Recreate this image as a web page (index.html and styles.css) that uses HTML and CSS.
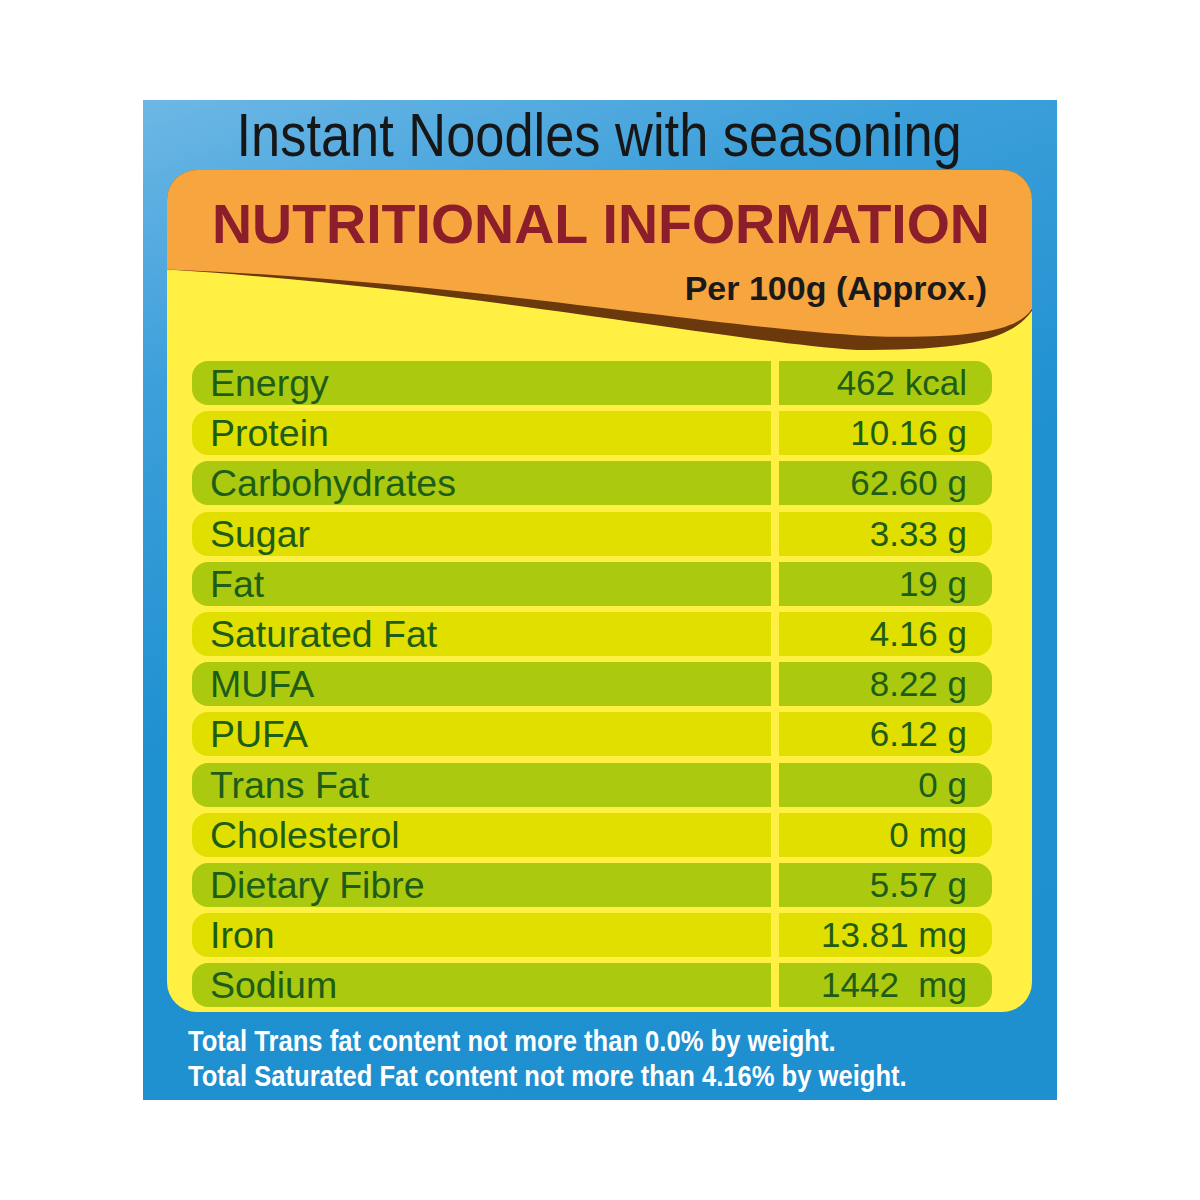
FILE: index.html
```html
<!DOCTYPE html>
<html lang="en">
<head>
  <meta charset="UTF-8" />
  <meta name="viewport" content="width=device-width, initial-scale=1.0" />
  <title>Nutritional Information</title>
  <link rel="stylesheet" href="styles.css">
</head>
<body>
  <div class="panel">
    <h1 class="title"><span class="narrow">Instant Noodles with seasoning</span></h1>

    <div class="card">
      <div class="header">
        <!-- fundo laranja com a onda marrom -->
        <svg class="wave" viewBox="0 0 865 190" preserveAspectRatio="none">
          <path d="M0 0 H865 V140 C845 168 800 180 690 179 C540 168 300 118 0 99 Z" fill="#6b390c" />
          <path d="M0 0 H865 V138 C850 160 810 166 720 166 C560 160 300 110 0 99 Z" fill="#f6a53f" />
        </svg>
        <h2 class="header-title">NUTRITIONAL INFORMATION</h2>
        <div class="header-sub">Per 100g (Approx.)</div>
      </div>

      <div class="rows">
        <div class="row"><div class="name">Energy</div><div class="value">462 kcal</div></div>
        <div class="row"><div class="name">Protein</div><div class="value">10.16 g</div></div>
        <div class="row"><div class="name">Carbohydrates</div><div class="value">62.60 g</div></div>
        <div class="row"><div class="name">Sugar</div><div class="value">3.33 g</div></div>
        <div class="row"><div class="name">Fat</div><div class="value">19 g</div></div>
        <div class="row"><div class="name">Saturated Fat</div><div class="value">4.16 g</div></div>
        <div class="row"><div class="name">MUFA</div><div class="value">8.22 g</div></div>
        <div class="row"><div class="name">PUFA</div><div class="value">6.12 g</div></div>
        <div class="row"><div class="name">Trans Fat</div><div class="value">0 g</div></div>
        <div class="row"><div class="name">Cholesterol</div><div class="value">0 mg</div></div>
        <div class="row"><div class="name">Dietary Fibre</div><div class="value">5.57 g</div></div>
        <div class="row"><div class="name">Iron</div><div class="value">13.81 mg</div></div>
        <div class="row"><div class="name">Sodium</div><div class="value">1442 &nbsp;mg</div></div>
      </div>
    </div>

    <div class="notes">
      <p><span class="narrow">Total Trans fat content not more than 0.0% by weight.</span></p>
      <p><span class="narrow">Total Saturated Fat content not more than 4.16% by weight.</span></p>
    </div>
  </div>
</body>
</html>
```

FILE: styles.css
```css
body {
  margin: 0;
  background: #fff;
  font-family: 'Liberation Sans', Arial, sans-serif;
}

.panel {
  width: 914px;
  height: 1000px;
  margin: 100px auto 0;
  padding: 0 25px 0 24px;
  box-sizing: border-box;
  background: linear-gradient(160deg, #6db7e5 0%, #3c9fda 22%, #1f90d0 50%, #1e8fcf 100%);
}

/* texto condensado (sem fonte narrow instalada) */
.narrow {
  display: inline-block;
  white-space: nowrap;
}

.title {
  margin: 0;
  height: 70px;
  line-height: 70px;
  text-align: center;
  font-weight: normal;
  font-size: 62px;
  color: #161616;
}

.title .narrow {
  transform: scaleX(0.845);
}

.card {
  position: relative;
  height: 842px;
  background: #fff043;
  border-radius: 30px;
  overflow: hidden;
}

.header {
  position: relative;
  height: 191px;
  padding: 0 45px;
  box-sizing: border-box;
}

.wave {
  position: absolute;
  left: 0;
  top: 0;
  width: 100%;
  height: 100%;
}

.header-title {
  position: relative;
  margin: 0;
  padding-top: 22px;
  font-size: 55.5px;
  line-height: 64px;
  font-weight: bold;
  color: #8c1d2b;
  white-space: nowrap;
}

.header-sub {
  position: relative;
  margin-top: 13px;
  text-align: right;
  font-size: 34px;
  font-weight: bold;
  color: #1a1a1a;
}

.rows {
  display: flex;
  flex-direction: column;
  gap: 6.2px;
  padding: 0 40px 0 25px;
}

.row {
  display: grid;
  grid-template-columns: 579px 213px;
  gap: 8px;
  height: 44px;
  line-height: 44px;
  color: #1d5d17;
}

.name {
  padding-left: 18px;
  font-size: 37.5px;
  border-radius: 16px 0 0 16px;
  background: #abc90e;
}

.value {
  padding-right: 25px;
  font-size: 35px;
  text-align: right;
  border-radius: 0 16px 16px 0;
  background: #abc90e;
}

.row:nth-child(even) .name,
.row:nth-child(even) .value {
  background: #e1df00;
}

.notes {
  padding: 12px 0 0 21px;
  font-weight: bold;
  font-size: 29px;
  line-height: 35px;
  color: #fff;
}

.notes p {
  margin: 0;
}

.notes .narrow {
  transform: scaleX(0.882);
  transform-origin: left center;
}
```
